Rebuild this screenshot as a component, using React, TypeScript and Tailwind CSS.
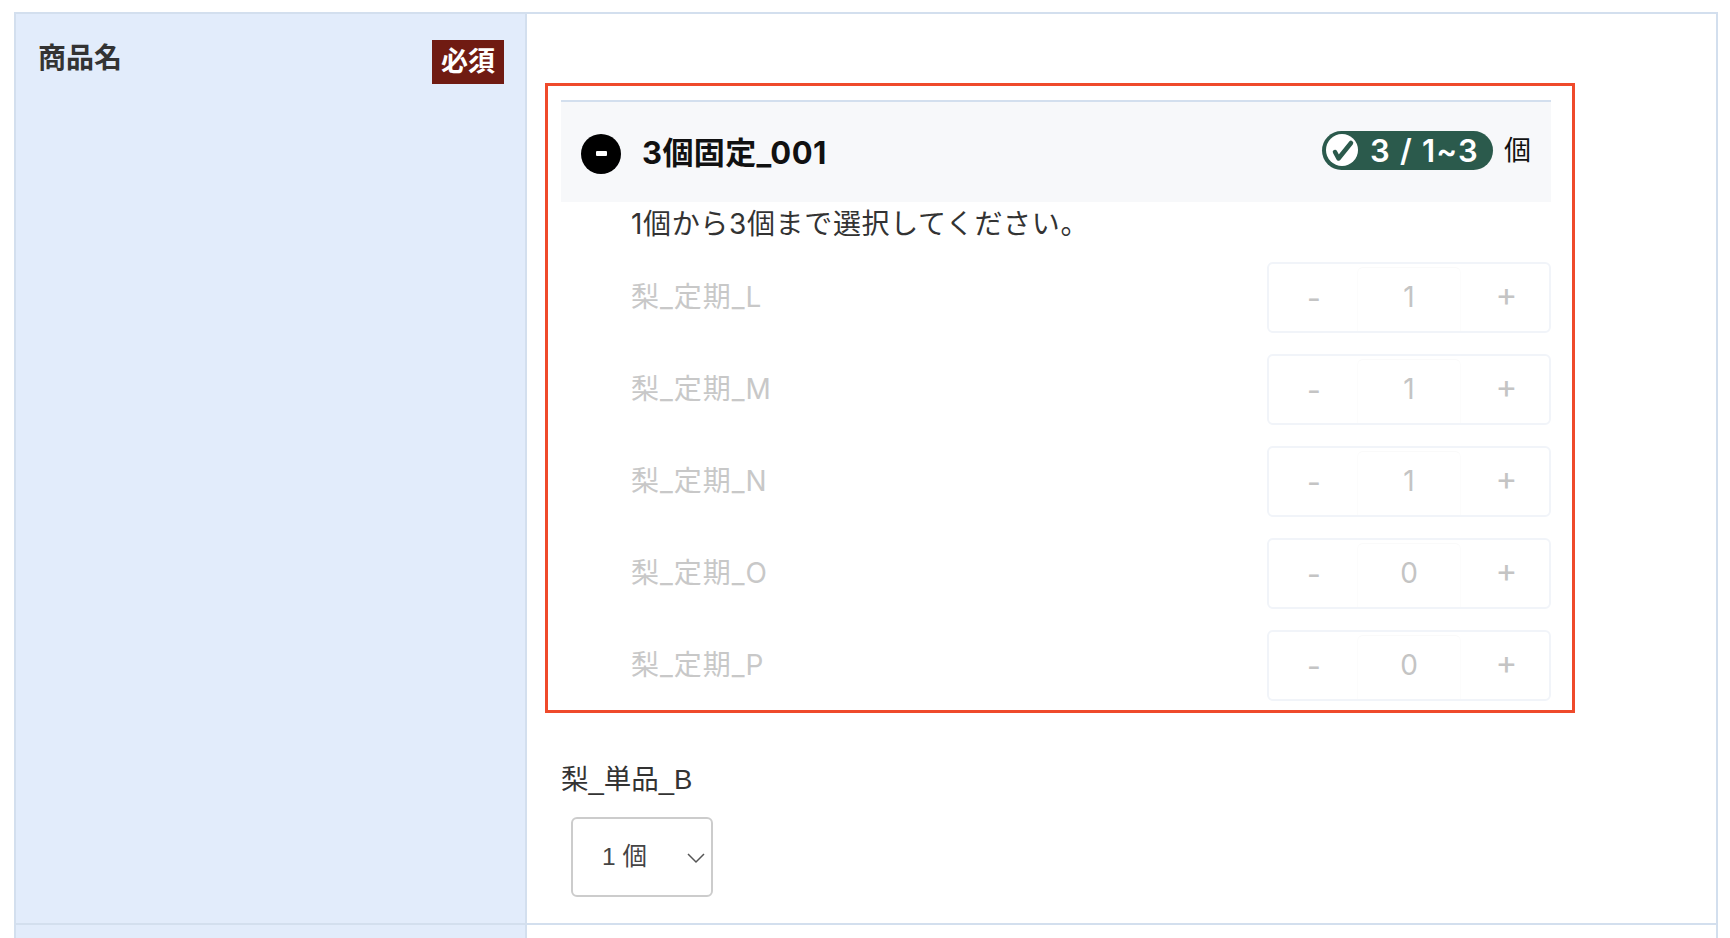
import React from 'react';

const items = [
  { name: '梨_定期_L', qty: 1 },
  { name: '梨_定期_M', qty: 1 },
  { name: '梨_定期_N', qty: 1 },
  { name: '梨_定期_O', qty: 0 },
  { name: '梨_定期_P', qty: 0 },
];

const inter = 'font-["Inter","Noto_Sans_CJK_JP",sans-serif]';

const Stepper: React.FC<{ qty: number }> = ({ qty }) => (
  <div className="flex h-[71px] w-[284px] items-stretch rounded-md border-2 border-[#f1f4f9] bg-white pt-[3px] text-[#c4c4c4]">
    <div className="flex w-[88px] items-center justify-center pl-[2px] pb-[2px] text-[30px] leading-none">-</div>
    <div className="flex w-[104px] items-center justify-center rounded-t-md border-x border-t border-x-[#fcfcfc] border-t-[#fafafa] pb-[5px] text-[28px] leading-none">
      {qty}
    </div>
    <div className="flex flex-1 items-center justify-center pb-[9px] pl-[3px] text-[33px] leading-none">+</div>
  </div>
);

const App: React.FC = () => {
  return (
    <div className={`h-[938px] overflow-hidden bg-white pl-[14px] pr-[12px] pt-[12px] ${inter}`}>
      <div className="border-x-2 border-t-2 border-[#d3dfee]">
        <div className="flex h-[911px] border-b-2 border-[#d3dfee]">
          <div className="flex w-[511px] shrink-0 items-start justify-between border-r-2 border-[#d3dfee] bg-[#e2ecfb] pl-[22px] pr-[21px] pt-[26px]">
            <span className='pt-[2px] font-["Liberation_Sans","Noto_Sans_CJK_JP",sans-serif] text-[28px] font-bold leading-[34px] text-[#333]'>商品名</span>
            <span className='flex h-[44px] w-[72px] items-center justify-center bg-[#701b12] font-["Liberation_Sans","Noto_Sans_CJK_JP",sans-serif] text-[27px] font-bold text-white'>必須</span>
          </div>

          <div className="flex-1 pl-[18px] pt-[69px]">
            <div className="h-[630px] w-[1030px] border-[3px] border-[#ef4a2b] pl-[13px] pr-[21px] pt-[14px]">
              <div className="flex h-[102px] items-center justify-between border-t-2 border-[#d3dfee] bg-[#f7f8fa] pl-[20px] pr-[20px]">
                <div className="flex items-center gap-[21px]">
                  <span className="mt-[3px] flex h-10 w-10 items-center justify-center rounded-full bg-black">
                    <span className="h-[5px] w-[11px] rounded-[1px] bg-white" />
                  </span>
                  <span className="text-[31px] font-bold leading-none tracking-[0.4px] text-[#111]">3個固定_001</span>
                </div>
                <div className="mb-[4px] flex items-center gap-[11px]">
                  <div className="flex h-[39px] w-[171px] items-center gap-[12px] rounded-full bg-[#2b5a4c] pl-[4px]">
                    <svg width="32" height="32" viewBox="0 0 32 32" fill="none">
                      <circle cx="16" cy="16" r="16" fill="#fff" />
                      <path d="M9 18 L12.500 24.500 L25 9" stroke="#2b5a4c" strokeWidth="4.500" strokeLinecap="round" strokeLinejoin="round" />
                    </svg>
                    <span className="whitespace-nowrap text-[31px] font-semibold leading-none tracking-[1.2px] text-white">3 / 1~3</span>
                  </div>
                  <span className="text-[27px] leading-none text-[#111]">個</span>
                </div>
              </div>

              <div className="pl-[70px]">
                <p className="h-[44px] text-[28px] leading-[44px] tracking-[0.65px] text-[#333]">1個から3個まで選択してください。</p>
                <div className="mt-[16px] flex flex-col gap-[21px]">
                  {items.map(item => (
                    <div key={item.name} className="flex items-center justify-between">
                      <span className="pb-[2px] text-[28px] leading-none tracking-[1px] text-[#c8c8c8]">{item.name}</span>
                      <Stepper qty={item.qty} />
                    </div>
                  ))}
                </div>
              </div>
            </div>

            <div className='font-["Liberation_Sans","Noto_Sans_CJK_JP",sans-serif]'>
              <p className="ml-[16px] mt-[46px] text-[27.500px] leading-[42px] text-[#333]">梨_単品_B</p>
              <div className="relative ml-[26px] mt-[16px] flex h-[80px] w-[142px] items-center rounded-md border-2 border-[#ccc] bg-white pl-[29px] text-[24.500px] text-[#444]">
                1 個
                <svg className="absolute right-[5px] top-[33px]" width="20" height="12" viewBox="0 0 20 12" fill="none">
                  <path d="M2 2l8 8 8-8" stroke="#555" strokeWidth="1.500" />
                </svg>
              </div>
            </div>
          </div>
        </div>

        <div className="flex h-[20px]">
          <div className="w-[511px] border-r-2 border-[#d3dfee] bg-[#e2ecfb]" />
          <div className="flex-1" />
        </div>
      </div>
    </div>
  );
};

export default App;
